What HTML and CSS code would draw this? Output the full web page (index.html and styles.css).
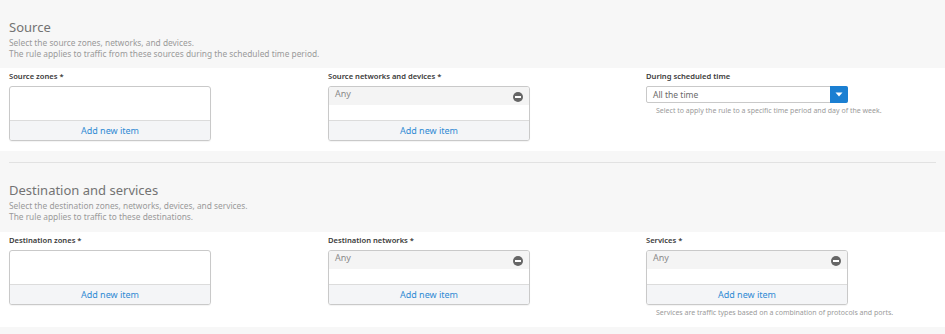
FILE: index.html
```html
<!DOCTYPE html>
<html lang="en">
<head>
  <meta charset="UTF-8" />
  <title>Firewall rule</title>
  <link rel="stylesheet" href="styles.css">
</head>
<body>
  <div class="section-head first">
    <h2 class="section-title">Source</h2>
    <p class="section-desc">Select the source zones, networks, and devices.<br>The rule applies to traffic from these sources during the scheduled time period.</p>
  </div>
  <div class="section-body">
    <div class="field">
      <label class="field-label">Source zones *</label>
      <div class="list-box">
        <div class="list-items"></div>
        <div class="list-add">Add new item</div>
      </div>
    </div>
    <div class="field">
      <label class="field-label">Source networks and devices *</label>
      <div class="list-box">
        <div class="list-items">
          <div class="list-item">Any<span class="remove-icon"></span></div>
        </div>
        <div class="list-add">Add new item</div>
      </div>
    </div>
    <div class="field">
      <label class="field-label">During scheduled time</label>
      <div class="select">
        <span class="select-value">All the time</span>
        <span class="select-btn"><svg width="8" height="5" viewBox="0 0 8 5"><path d="M0.5 0.5h7L4 4.5z" fill="#fff"/></svg></span>
      </div>
      <p class="help">Select to apply the rule to a specific time period and day of the week.</p>
    </div>
  </div>

  <div class="section-head">
    <hr class="divider">
    <h2 class="section-title">Destination and services</h2>
    <p class="section-desc">Select the destination zones, networks, devices, and services.<br>The rule applies to traffic to these destinations.</p>
  </div>
  <div class="section-body">
    <div class="field">
      <label class="field-label">Destination zones *</label>
      <div class="list-box">
        <div class="list-items"></div>
        <div class="list-add">Add new item</div>
      </div>
    </div>
    <div class="field">
      <label class="field-label">Destination networks *</label>
      <div class="list-box">
        <div class="list-items">
          <div class="list-item">Any<span class="remove-icon"></span></div>
        </div>
        <div class="list-add">Add new item</div>
      </div>
    </div>
    <div class="field">
      <label class="field-label">Services *</label>
      <div class="list-box">
        <div class="list-items">
          <div class="list-item">Any<span class="remove-icon"></span></div>
        </div>
        <div class="list-add">Add new item</div>
      </div>
      <p class="help">Services are traffic types based on a combination of protocols and ports.</p>
    </div>
  </div>
  <div class="page-foot"></div>
</body>
</html>
```

FILE: styles.css
```css
*, *::before, *::after {
  box-sizing: border-box;
}

body {
  margin: 0;
  background: #f7f7f7;
  font-family: "Noto Sans", "Open Sans", sans-serif;
  color: #333;
  overflow: hidden;
}

.section-head {
  padding: 0 9px 10px;
}

.section-head.first {
  padding-top: 18px;
  padding-bottom: 9px;
}

.divider {
  margin: 11px 0 18px;
  border: none;
  border-top: 1px solid #e2e2e2;
}

.section-title {
  margin: 0;
  font-size: 13px;
  line-height: 18px;
  font-weight: 400;
  color: #737373;
}

.section-desc {
  margin: 1px 0 0;
  font-size: 8.35px;
  line-height: 11px;
  color: #9a9a9a;
}

.section-body {
  background: #fff;
  padding: 3px 9px 10px;
  display: grid;
  grid-template-columns: 319px 318px 201px;
}

.field-label {
  display: block;
  font-size: 7.6px;
  line-height: 10px;
  font-weight: 600;
  color: #3a3a3a;
  margin-bottom: 5px;
}

.list-box {
  width: 202px;
  border: 1px solid #c9c9c9;
  border-radius: 3px;
  background: #fff;
  overflow: hidden;
  box-shadow: 0 1px 1px rgba(0,0,0,0.05);
}

.list-items {
  height: 33px;
}

.list-item {
  height: 18px;
  background: #f4f4f4;
  padding: 1px 6px 0;
  display: flex;
  justify-content: space-between;
  align-items: flex-start;
  font-size: 9px;
  line-height: 12px;
  color: #8a8a8a;
}

.remove-icon {
  width: 10px;
  height: 10px;
  margin-top: 4px;
  border-radius: 50%;
  background: #666;
  position: relative;
}

.remove-icon::after {
  content: "";
  position: absolute;
  left: 2px;
  right: 2px;
  top: 4px;
  height: 2px;
  background: #fff;
}

.list-add {
  height: 20px;
  border-top: 1px solid #dcdcdc;
  background: #f4f5f7;
  text-align: center;
  font-size: 9px;
  line-height: 19px;
  color: #2f8ad4;
}

.select {
  width: 202px;
  height: 17px;
  border: 1px solid #c9c9c9;
  border-radius: 2px;
  display: flex;
  align-items: center;
  background: #fff;
}

.select-value {
  flex: 1;
  padding-left: 6px;
  font-size: 8.5px;
  color: #6a6a6a;
}

.select-btn {
  width: 18px;
  height: 17px;
  margin: -1px -1px -1px 0;
  background: #1b7fd2;
  border-radius: 0 2px 2px 0;
  display: flex;
  align-items: center;
  justify-content: center;
}

.help {
  margin: 3px 0 0 10px;
  font-size: 7px;
  line-height: 9px;
  color: #9a9a9a;
  white-space: nowrap;
}

.page-foot {
  height: 8px;
}
```
